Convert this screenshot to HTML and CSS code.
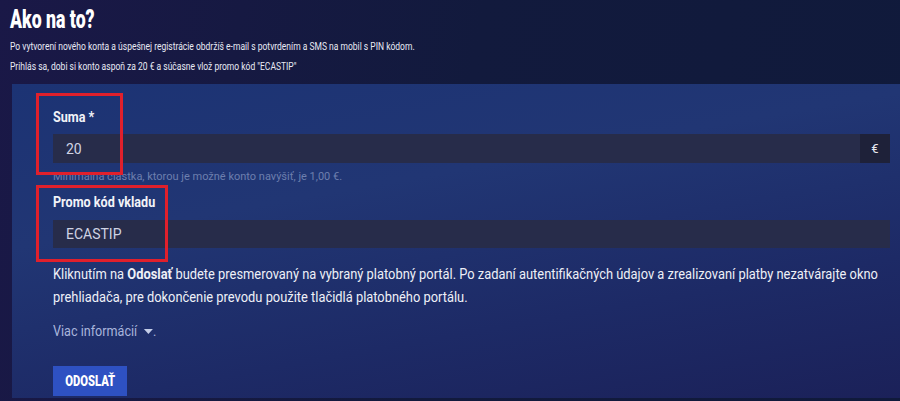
FILE: index.html
```html
<!DOCTYPE html>
<html lang="sk">
<head>
    <meta charset="UTF-8">
    <title>Ako na to?</title>
    <link rel="stylesheet" href="styles.css">
</head>
<body>
    <div class="intro">
        <h1>Ako na to?</h1>
        <p>Po vytvorení nového konta a úspešnej registrácie obdržíš e-mail s potvrdením a SMS na mobil s PIN kódom.</p>
        <p>Prihlás sa, dobi si konto aspoň za 20 € a súčasne vlož promo kód "ECASTIP"</p>
    </div>
    <div class="panel">
        <form class="deposit">
            <label class="label">Suma *</label>
            <div class="field">
                <input class="input" type="text" value="20">
                <span class="addon">€</span>
            </div>
            <p class="hint">Minimálna čiastka, ktorou je možné konto navýšiť, je 1,00 €.</p>

            <label class="label">Promo kód vkladu</label>
            <div class="field">
                <input class="input" type="text" value="ECASTIP">
            </div>

            <p class="note">Kliknutím na <b>Odoslať</b> budete presmerovaný na vybraný platobný portál. Po zadaní autentifikačných údajov a zrealizovaní platby nezatvárajte okno prehliadača, pre dokončenie prevodu použite tlačidlá platobného portálu.</p>
            <p class="more">Viac informácií <span class="caret"></span>.</p>

            <button class="send" type="button"><span>ODOSLAŤ</span></button>

            <!-- zvyraznenie -->
            <span class="mark mark-sum"></span>
            <span class="mark mark-promo"></span>
        </form>
    </div>
</body>
</html>
```

FILE: styles.css
```css
* {
    margin: 0;
    padding: 0;
    box-sizing: border-box;
}

body {
    width: 900px;
    height: 401px;
    overflow: hidden;
    background: linear-gradient(100deg, #1a1847 0%, #121a3d 50%, #101a3b 100%);
    font-family: "Roboto", "Liberation Sans", sans-serif;
    color: #fff;
}

.intro {
    padding: 4px 10px 0 10px;
    height: 84px;
}

/* sirka ako v condensed fonte */
.intro h1 {
    display: inline-block;
    font-size: 26px;
    line-height: 30px;
    font-weight: 900;
    transform: scaleX(0.68);
    transform-origin: left center;
}

.intro p {
    font-size: 10px;
    line-height: 20px;
    color: #e8eaf4;
    white-space: nowrap;
    transform: scaleX(0.85);
    transform-origin: left center;
}

.intro h1 + p {
    margin-top: 3px;
}

.panel {
    margin-left: 12px;
    height: 314px;
    padding: 23px 10px 0 41px;
    background: linear-gradient(170deg, #1c3374 0%, #213674 35%, #1d2a66 70%, #1b2159 100%);
}

.deposit {
    position: relative;
    width: 837px;
}

.label {
    display: block;
    font-size: 14px;
    line-height: 20px;
    font-weight: bold;
    color: #f2f3f8;
    transform: scaleX(0.9);
    transform-origin: left center;
}

.field {
    display: flex;
    height: 29px;
    margin-top: 7px;
    background: #272c4a;
}

.input {
    flex: 1;
    border: 0;
    outline: 0;
    background: transparent;
    padding: 0 13px;
    font-family: inherit;
    font-size: 14px;
    color: #cfd3e4;
}

.addon {
    width: 30px;
    display: flex;
    align-items: center;
    justify-content: center;
    background: #1e2139;
    font-size: 13px;
    color: #e6e8f0;
}

.hint {
    margin-top: 6px;
    margin-bottom: 7px;
    font-size: 11px;
    line-height: 16px;
    color: #6d7fae;
}

.hint + .label + .field {
    height: 28px;
    margin-top: 8px;
}

.note {
    width: 910px;
    margin-top: 15px;
    font-size: 14px;
    line-height: 23px;
    color: #eef0f7;
    transform: scaleX(0.92);
    transform-origin: left top;
}

.more {
    margin-top: 12px;
    font-size: 14px;
    line-height: 20px;
    color: #a9b5dc;
    transform: scaleX(0.9);
    transform-origin: left center;
}

.caret {
    display: inline-block;
    margin: 0 0 2px 4px;
    border-left: 5px solid transparent;
    border-right: 5px solid transparent;
    border-top: 5px solid #c4cde8;
}

.send {
    display: flex;
    align-items: center;
    justify-content: center;
    margin-top: 25px;
    width: 74px;
    height: 30px;
    border: 0;
    background: #2e51c2;
    color: #fff;
    font-family: inherit;
    font-size: 14px;
    font-weight: 900;
}

.send span {
    display: inline-block;
    transform: scaleX(0.8);
}

.mark {
    position: absolute;
    border: 3px solid #e0202c;
}

.mark-sum {
    left: -17px;
    top: -14px;
    width: 87px;
    height: 82px;
}

.mark-promo {
    left: -17px;
    top: 78px;
    width: 132px;
    height: 77px;
}
```
